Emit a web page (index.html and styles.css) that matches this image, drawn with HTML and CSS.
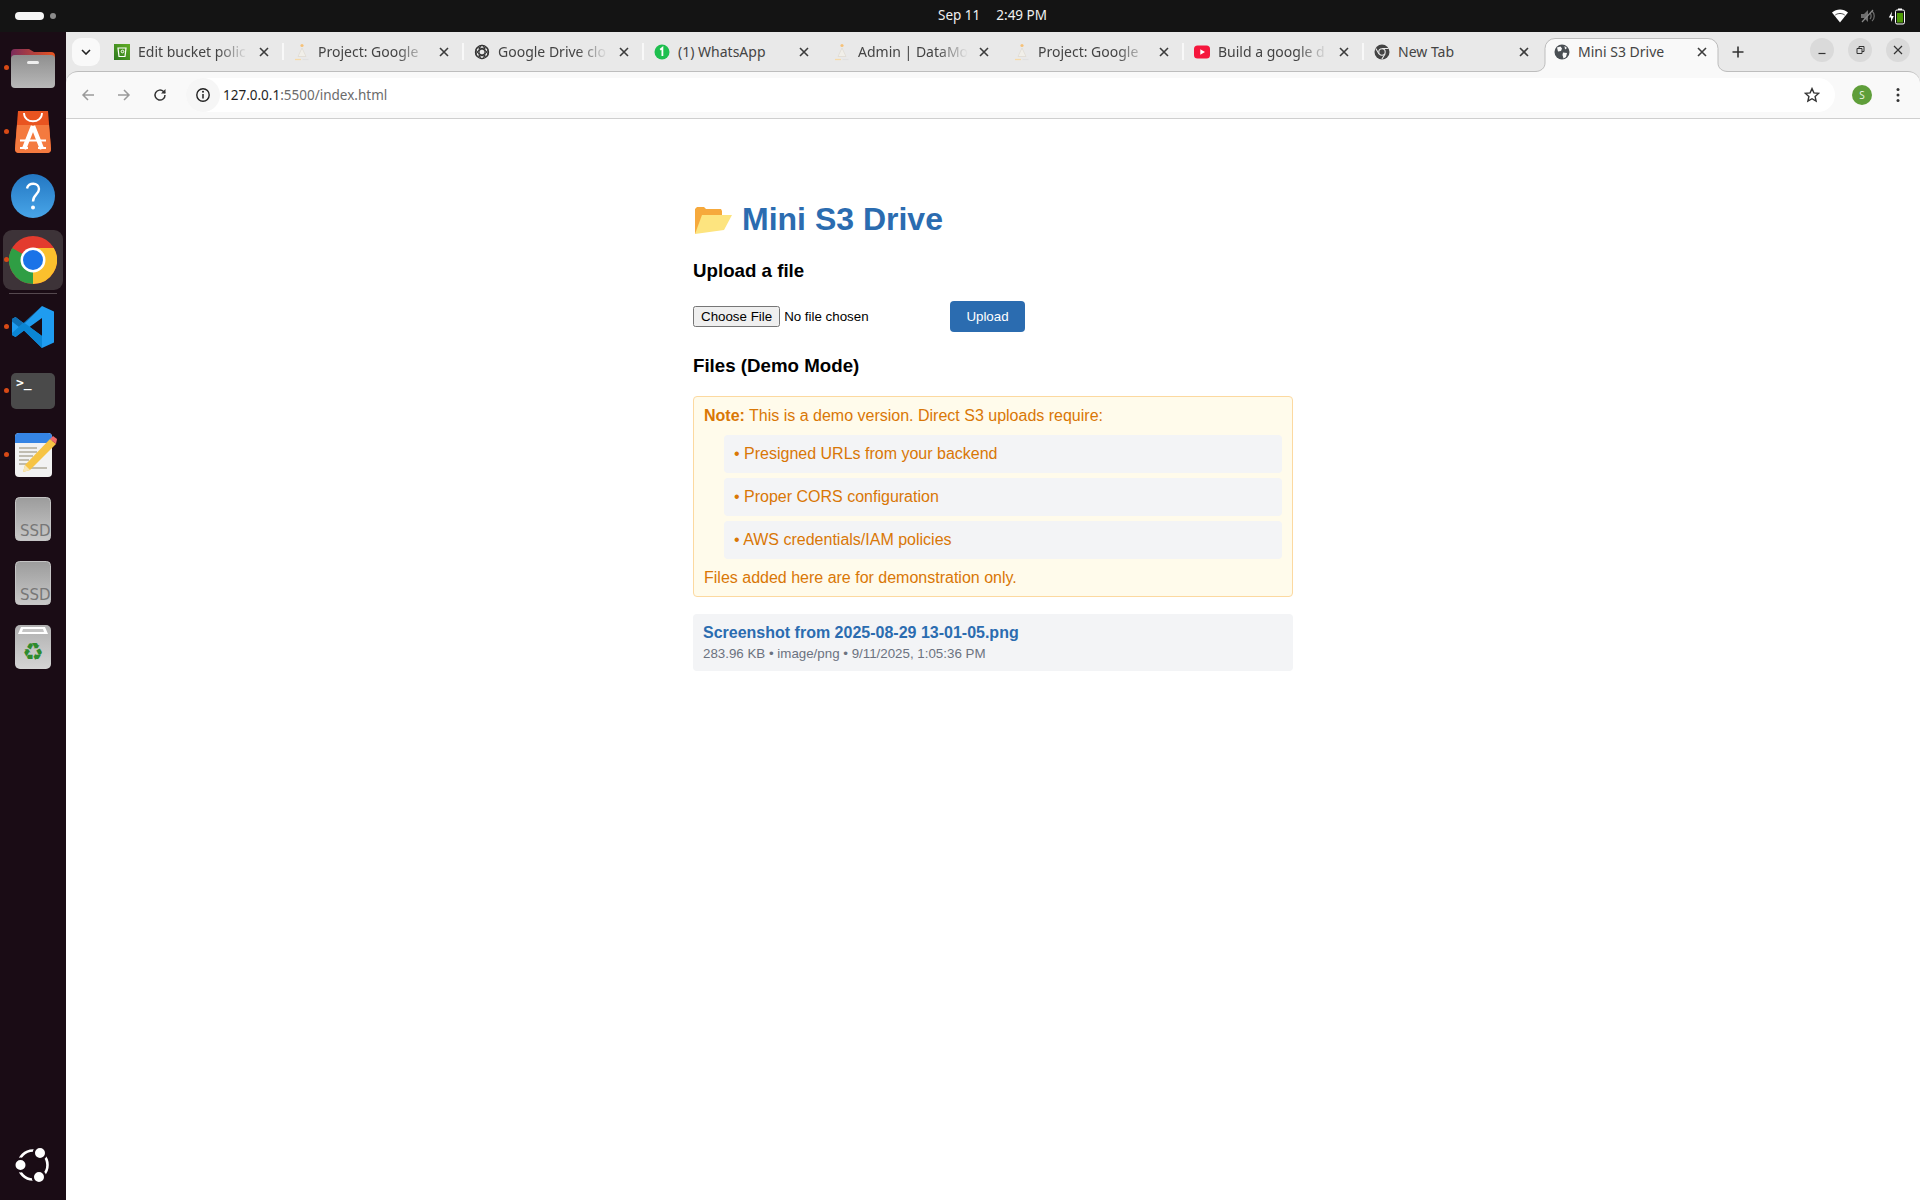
FILE: index.html
```html
<!DOCTYPE html>
<html lang="en">
<head>
<meta charset="utf-8">
<title>Mini S3 Drive</title>
<link rel="stylesheet" href="styles.css">
</head>
<body>
<svg class="defs" width="0" height="0" aria-hidden="true">
  <defs>
    <linearGradient id="ssdg" x1="0" y1="0" x2="0" y2="1"><stop offset="0" stop-color="#9c9c9c"/><stop offset="1" stop-color="#c8c8c8"/></linearGradient>
    <linearGradient id="s3g" x1="0" y1="1" x2="1" y2="0"><stop offset="0" stop-color="#2d7a1f"/><stop offset="1" stop-color="#62ad25"/></linearGradient>
  </defs>
  <symbol id="x" viewBox="0 0 12 12"><path d="M2 2l8 8M10 2l-8 8" fill="none" stroke="#3c3c3c" stroke-width="1.600"/></symbol>
  <symbol id="monk" viewBox="0 0 16 20">
    <circle cx="8" cy="3.500" r="1.600" fill="#f5c27a"/>
    <path d="M8 6L4 14.500h8z" fill="#f1efe9" stroke="#dcd9d0" stroke-width=".7"/>
    <path d="M1 17.500h6" stroke="#f6d9a6" stroke-width="1.300"/><path d="M8.500 17.500h6" stroke="#e0e0e0" stroke-width="1.300"/>
  </symbol>
</svg>

<header class="topbar">
  <div class="workspaces"><span class="pill"></span><span class="dot"></span></div>
  <div class="clock"><span>Sep 11</span><span>2:49 PM</span></div>
  <div class="tray">
    <svg width="16" height="14" viewBox="0 0 16 14"><path d="M0 3.500C4.500-.5 11.500-.5 16 3.500L8 13.500z" fill="#fff"/><path d="M3.300 6C6 4 10 4 12.700 6" stroke="#141414" stroke-width=".8" fill="none"/></svg>
    <svg width="16" height="16" viewBox="0 0 16 16"><path d="M1 6h3l4-4v12l-4-4H1z" fill="#6f6f6f"/><path d="M10 5c1.500 1.500 1.500 4.500 0 6M12 3c3 2.500 3 7.500 0 10" stroke="#6f6f6f" stroke-width="1.200" fill="none"/><path d="M2 14L13 2" stroke="#8a8a8a" stroke-width="1.200"/></svg>
    <svg width="17" height="17" viewBox="0 0 17 17"><path d="M4 3.500L.8 9.500h2.200v4.500L5.800 8H3.500z" fill="#fff"/><rect x="7.500" y="2" width="9" height="14" rx="1.500" fill="none" stroke="#fff" stroke-width="1"/><rect x="10" y=".5" width="4" height="1.500" fill="#fff"/><rect x="9" y="5" width="6" height="9.500" fill="#4e9a06"/></svg>
  </div>
</header>

<div class="desktop">
  <nav class="dock">
    <div class="dock-item running">
      <svg width="44" height="40" viewBox="0 0 44 40"><defs><linearGradient id="fb" x1="0" y1="0" x2="1" y2="0"><stop offset="0" stop-color="#7b2c5c"/><stop offset="1" stop-color="#e95420"/></linearGradient><linearGradient id="ff" x1="0" y1="0" x2="0" y2="1"><stop offset="0" stop-color="#8f8f8f"/><stop offset="1" stop-color="#b8b8b8"/></linearGradient></defs><path d="M0 5a4 4 0 0 1 4-4h14l5 3h17a4 4 0 0 1 4 4v10H0z" fill="url(#fb)"/><rect y="7" width="44" height="33" rx="4" fill="url(#ff)"/><rect x="16" y="13" width="12" height="3" rx="1.500" fill="#eee"/></svg>
    </div>
    <div class="dock-item running">
      <svg width="36" height="42" viewBox="0 0 36 42"><path d="M3 0h30l3 38a4 4 0 0 1-4 4H4a4 4 0 0 1-4-4z" fill="#e95420"/><path d="M2 14h32l2 24a4 4 0 0 1-4 4H4a4 4 0 0 1-4-4z" fill="#f47a3f"/><path d="M9 2c0 11 18 11 18 0" fill="none" stroke="#fff" stroke-width="1.800"/><path d="M18 15L9 38M18 15l9 23" stroke="#fff" stroke-width="4.500" fill="none"/><path d="M5 29.500h26M5 37h8M23 37h8" stroke="#fff" stroke-width="2.200" fill="none"/></svg>
    </div>
    <div class="dock-item">
      <svg width="44" height="44" viewBox="0 0 44 44"><defs><linearGradient id="hg" x1="0" y1="0" x2="0" y2="1"><stop offset="0" stop-color="#2377c2"/><stop offset="1" stop-color="#48a5e8"/></linearGradient></defs><circle cx="22" cy="22" r="22" fill="url(#hg)"/><path d="M16 14.500c1-6.500 12-6.500 12 .5 0 5.500-6 5.500-6 12.500" fill="none" stroke="#fff" stroke-width="2.400"/><circle cx="22" cy="33.500" r="2" fill="#fff"/></svg>
    </div>
    <div class="dock-item running active">
      <svg width="48" height="48" viewBox="0 0 48 48"><circle cx="24" cy="24" r="24" fill="#e33b2e"/><path d="M24 24L3.200 12A24 24 0 0 0 24 48z" fill="#2f9e44"/><path d="M24 24v24A24 24 0 0 0 44.800 12H24z" fill="#fbc02d"/><circle cx="24" cy="24" r="12.500" fill="#fff"/><circle cx="24" cy="24" r="10" fill="#1a73e8"/></svg>
    </div>
    <div class="dock-sep"></div>
    <div class="dock-item running">
      <svg width="42" height="42" viewBox="0 0 42 42"><path d="M30 0l12 5.500v31L30 42 12 24.500 3.500 31 0 29V13l3.500-2 8.500 6.500zM30 12L17.500 21 30 30z" fill="#1f9cf0"/><path d="M30 0L7 21 0 15.500V13l3.500-2 8.500 6.500z" fill="#0f6fb3"/><path d="M0 29l3.500 2 8.500-6.500 18 17.500v-12L12 16.500 0 27z" fill="#0b86d4"/></svg>
    </div>
    <div class="dock-item running">
      <svg width="44" height="36" viewBox="0 0 44 36"><rect width="44" height="36" rx="5" fill="#4a4a4a"/><text x="5" y="14" class="term-prompt">&gt;_</text></svg>
    </div>
    <div class="dock-item running">
      <svg class="notes-icon" width="42" height="44" viewBox="0 0 42 44"><rect x="0" width="37" height="44" rx="4" fill="#f2f2f2"/><path d="M0 10V4a4 4 0 0 1 4-4h29a4 4 0 0 1 4 4v6z" fill="#3584e4"/><path d="M4 15h18M4 19h18M4 23h14M4 27h10M4 31h8M14 35h18" stroke="#c0bcb0" stroke-width="2"/><path d="M35 6l6 5L15 37l-7 2 2-7z" fill="#f6c445"/><path d="M10 32l5 5-7 2z" fill="#f6e5b5"/><path d="M35 6l3-3 4 3-1 5z" fill="#ed6a6a"/></svg>
    </div>
    <div class="dock-item"><svg width="36" height="44" viewBox="0 0 36 44"><rect x=".5" y=".5" width="35" height="43" rx="4" fill="url(#ssdg)" stroke="#c4c4c4"/><text x="5" y="39" class="ssd-label">SSD</text></svg></div>
    <div class="dock-item"><svg width="36" height="44" viewBox="0 0 36 44"><rect x=".5" y=".5" width="35" height="43" rx="4" fill="url(#ssdg)" stroke="#c4c4c4"/><text x="5" y="39" class="ssd-label">SSD</text></svg></div>
    <div class="dock-item">
      <svg width="36" height="44" viewBox="0 0 36 44"><defs><linearGradient id="tg" x1="0" y1="0" x2="0" y2="1"><stop offset="0" stop-color="#b0b0b0"/><stop offset="1" stop-color="#d4d4d4"/></linearGradient></defs><rect width="36" height="44" rx="5" fill="url(#tg)"/><path d="M6 2h24l3 7H3z" fill="#fff"/><path d="M8 4h20l1 3H7z" fill="#c4c4c4"/><text x="18" y="35" text-anchor="middle" class="recycle">♻</text></svg>
    </div>
    <div class="dock-item dock-bottom">
      <svg width="36" height="36" viewBox="0 0 36 36"><circle cx="18" cy="18" r="14.500" fill="none" stroke="#fff" stroke-width="2.600"/><g fill="#fff" stroke="#1a0c15" stroke-width="2.400"><circle cx="25" cy="6" r="6.200"/><circle cx="5.500" cy="18" r="6.200"/><circle cx="24" cy="30" r="6.200"/></g></svg>
    </div>
  </nav>

  <div class="browser">
    <div class="tabstrip">
      <div class="tab-menu"><svg width="10" height="6" viewBox="0 0 10 6"><path d="M1 1l4 4 4-4" fill="none" stroke="#222" stroke-width="1.600"/></svg></div>
      <div class="tab sep">
        <svg class="fav" width="16" height="16" viewBox="0 0 16 16"><rect width="16" height="16" fill="url(#s3g)"/><path d="M4 4h8l-1 8.500H5z" fill="none" stroke="#fff" stroke-width="1.200"/><circle cx="8.500" cy="7.500" r="1.300" fill="none" stroke="#fff"/></svg>
        <span class="tab-title">Edit bucket polic</span><svg class="close" width="12" height="12"><use href="#x"/></svg>
      </div>
      <div class="tab sep">
        <svg class="fav" width="16" height="20"><use href="#monk"/></svg>
        <span class="tab-title">Project: Google</span><svg class="close" width="12" height="12"><use href="#x"/></svg>
      </div>
      <div class="tab sep">
        <svg class="fav" width="16" height="16" viewBox="0 0 16 16"><g fill="none" stroke="#333" stroke-width="1.200"><circle cx="8" cy="8" r="6.600"/><ellipse cx="8" cy="8" rx="6.600" ry="3" transform="rotate(30 8 8)"/><ellipse cx="8" cy="8" rx="6.600" ry="3" transform="rotate(90 8 8)"/><ellipse cx="8" cy="8" rx="6.600" ry="3" transform="rotate(150 8 8)"/></g></svg>
        <span class="tab-title">Google Drive clo</span><svg class="close" width="12" height="12"><use href="#x"/></svg>
      </div>
      <div class="tab">
        <svg class="fav" width="16" height="16" viewBox="0 0 16 16"><circle cx="8" cy="8" r="7.500" fill="#1fbf4f"/><path d="M6.200 5.800L8.400 4v8" fill="none" stroke="#fff" stroke-width="1.800"/></svg>
        <span class="tab-title plain">(1) WhatsApp</span><svg class="close" width="12" height="12"><use href="#x"/></svg>
      </div>
      <div class="tab">
        <svg class="fav" width="16" height="20"><use href="#monk"/></svg>
        <span class="tab-title">Admin | DataMo</span><svg class="close" width="12" height="12"><use href="#x"/></svg>
      </div>
      <div class="tab sep">
        <svg class="fav" width="16" height="20"><use href="#monk"/></svg>
        <span class="tab-title">Project: Google</span><svg class="close" width="12" height="12"><use href="#x"/></svg>
      </div>
      <div class="tab sep">
        <svg class="fav" width="16" height="16" viewBox="0 0 16 16"><rect y="1.500" width="16" height="13" rx="3.500" fill="#f5163c"/><path d="M6.300 5.300L11 8l-4.700 2.700z" fill="#fff"/></svg>
        <span class="tab-title">Build a google d</span><svg class="close" width="12" height="12"><use href="#x"/></svg>
      </div>
      <div class="tab">
        <svg class="fav" width="16" height="16" viewBox="0 0 16 16"><circle cx="8" cy="8" r="7.500" fill="#444"/><path d="M8 4.500h6.500M5 10L1.800 4.500M11 10l-3.200 5.300" stroke="#e9e9e9" stroke-width="1.100"/><circle cx="8" cy="8" r="3.200" fill="#444" stroke="#e9e9e9" stroke-width="1.100"/></svg>
        <span class="tab-title plain">New Tab</span><svg class="close" width="12" height="12"><use href="#x"/></svg>
      </div>
      <div class="tab active">
        <svg class="tab-shape" width="193" height="34" viewBox="0 0 193 34"><path d="M0 34V33.500C6 33.500 10 30 10 25V10.500A10 10 0 0 1 20 .5H173A10 10 0 0 1 183 10.500V25C183 30 187 33.500 193 33.500V34z" fill="#f9f9f9"/><path d="M0 33.500C6 33.500 10 30 10 25V10.500A10 10 0 0 1 20 .5H173A10 10 0 0 1 183 10.500V25C183 30 187 33.500 193 33.500" fill="none" stroke="#bdbdbd"/></svg>
        <svg class="fav" width="16" height="16" viewBox="0 0 16 16"><circle cx="8" cy="8" r="7.500" fill="#4a4f54"/><path d="M3 3.500l3.500-1 1.500 2-1 2.500-3 .5zM9 8.500l4 .5-1 4-2.500 1.500L8.500 11zM10.500 2l2.500 2-2 1.500z" fill="#f9f9f9"/></svg>
        <span class="tab-title plain">Mini S3 Drive</span><svg class="close" width="12" height="12"><use href="#x"/></svg>
      </div>
      <svg class="new-tab" width="14" height="14" viewBox="0 0 14 14"><path d="M7 1.500v11M1.500 7h11" stroke="#333" stroke-width="1.600"/></svg>
      <div class="win-controls">
        <span class="win-btn"><svg width="10" height="10" viewBox="0 0 10 10"><path d="M1.500 8.500h7" stroke="#333" stroke-width="1.200"/></svg></span>
        <span class="win-btn"><svg width="10" height="10" viewBox="0 0 10 10"><path d="M2 3.500h5v5H2zM4 3.500V1.500h5v5H7" fill="none" stroke="#333" stroke-width="1"/></svg></span>
        <span class="win-btn"><svg width="10" height="10" viewBox="0 0 10 10"><path d="M1 1l8 8M9 1L1 9" stroke="#333" stroke-width="1.200"/></svg></span>
      </div>
    </div>

    <div class="toolbar">
      <svg class="nav-icon" width="16" height="16" viewBox="0 0 16 16"><path d="M14 8H3M8 3L3 8l5 5" fill="none" stroke="#9a9a9a" stroke-width="1.500"/></svg>
      <svg class="nav-icon" width="16" height="16" viewBox="0 0 16 16"><path d="M2 8h11M8 3l5 5-5 5" fill="none" stroke="#9a9a9a" stroke-width="1.500"/></svg>
      <svg class="nav-icon" width="16" height="16" viewBox="0 0 16 16"><path d="M13 8a5 5 0 1 1-1.500-3.500L13 6" fill="none" stroke="#333" stroke-width="1.500"/><path d="M13.500 2v4.500H9z" fill="#333"/></svg>
      <div class="omnibox">
        <span class="info-chip"><svg width="16" height="16" viewBox="0 0 16 16"><circle cx="8" cy="8" r="6.200" fill="none" stroke="#222" stroke-width="1.400"/><path d="M8 7v4.500" stroke="#222" stroke-width="1.500"/><circle cx="8" cy="4.800" r="1" fill="#222"/></svg></span>
        <span class="url"><span class="host">127.0.0.1</span>:5500/index.html</span>
        <svg class="star" width="16" height="16" viewBox="0 0 16 16"><path d="M8 1.600l1.900 4.300 4.700.5-3.500 3.100 1 4.600L8 11.700l-4.100 2.400 1-4.600L1.400 6.400l4.700-.5z" fill="none" stroke="#333" stroke-width="1.400"/></svg>
      </div>
      <span class="avatar">S</span>
      <svg class="kebab" width="4" height="16" viewBox="0 0 4 16"><circle cx="2" cy="2.500" r="1.500" fill="#333"/><circle cx="2" cy="8" r="1.500" fill="#333"/><circle cx="2" cy="13.500" r="1.500" fill="#333"/></svg>
    </div>

    <main class="page">
      <div class="content">
        <h1 class="title">
          <svg class="title-emoji" width="38" height="30" viewBox="0 0 38 30"><path d="M1 30L1 5l2-2h7l2 2h15l1 2v4z" fill="#f6a93c"/><path d="M1 30L8 11h30l-8 15z" fill="#fde47f"/></svg>
          <span>Mini S3 Drive</span>
        </h1>
        <h2 class="section-title">Upload a file</h2>
        <div class="upload-row">
          <input class="file-input" type="file">
          <button class="upload-btn" type="button">Upload</button>
        </div>
        <h2 class="section-title files-title">Files (Demo Mode)</h2>
        <div class="note">
          <p class="note-line"><strong>Note:</strong> This is a demo version. Direct S3 uploads require:</p>
          <ul class="note-list">
            <li>• Presigned URLs from your backend</li>
            <li>• Proper CORS configuration</li>
            <li>• AWS credentials/IAM policies</li>
          </ul>
          <p class="note-line">Files added here are for demonstration only.</p>
        </div>
        <div class="file-row">
          <a class="file-name" href="#">Screenshot from 2025-08-29 13-01-05.png</a>
          <div class="file-meta">283.96 KB • image/png • 9/11/2025, 1:05:36 PM</div>
        </div>
      </div>
    </main>
  </div>
</div>
</body>
</html>
```

FILE: styles.css
```css
* { box-sizing: border-box; }
html, body { margin: 0; height: 100%; }
body {
  width: 1920px;
  height: 1200px;
  overflow: hidden;
  display: flex;
  flex-direction: column;
  font-family: "Liberation Sans", Arial, sans-serif;
  background: #1a0c15;
}
.defs { display: block; height: 0; }
.ssd-label { font: 15px "DejaVu Sans", sans-serif; fill: #777; }
.term-prompt { font: bold 13px "DejaVu Sans Mono", monospace; fill: #fff; }
.recycle { font: 24px "DejaVu Sans", sans-serif; fill: #2e8b2e; }

/* top bar */
.topbar {
  height: 32px;
  flex: none;
  background: #141414;
  display: grid;
  grid-template-columns: 938px auto 1fr;
  align-items: center;
  color: #f0f0f0;
  font: 14px "Noto Sans", sans-serif;
}
.workspaces { display: flex; align-items: center; gap: 6px; padding-left: 15px; }
.pill { width: 29px; height: 8px; border-radius: 4px; background: #f5f5f5; }
.dot { width: 6px; height: 6px; border-radius: 50%; background: #8c8c8c; }
.clock { display: flex; gap: 16px; font-size: 13.500px; line-height: 30px; height: 32px; }
.tray { display: flex; align-items: center; justify-content: flex-end; gap: 12px; padding-right: 15px; }

.desktop { flex: 1; display: flex; min-height: 0; }

/* dock */
.dock {
  width: 66px;
  flex: none;
  display: flex;
  flex-direction: column;
  align-items: center;
  padding: 4px 0 3px;
  background: #1a0c15;
}
.dock-item {
  position: relative;
  width: 60px;
  height: 64px;
  flex: none;
  display: flex;
  align-items: center;
  justify-content: center;
}
.dock-item.running::before {
  content: "";
  position: absolute;
  left: 1px;
  top: 29px;
  width: 5px;
  height: 5px;
  border-radius: 50%;
  background: #d84a16;
  z-index: 2;
}
.dock-item.active::after {
  content: "";
  position: absolute;
  inset: 2px 0;
  border-radius: 9px;
  background: #3d3338;
}
.dock-item.active svg { position: relative; z-index: 1; }
.notes-icon { margin-left: 6px; }
.dock-sep { width: 48px; height: 3px; flex: none; padding-top: 1px; }
.dock-sep::before { content: ""; display: block; height: 1px; background: #55494f; }
.dock-bottom { margin-top: auto; }

/* browser */
.browser { flex: 1; min-width: 0; display: flex; flex-direction: column; background: #fff; }
.tabstrip {
  position: relative;
  z-index: 2;
  height: 39px;
  flex: none;
  display: flex;
  align-items: flex-start;
  padding: 6px 0 0 6px;
  background: #e9e9e9;
  font: 14px/26px "Noto Sans", sans-serif;
  color: #444;
}
.tab-menu {
  width: 28px;
  height: 28px;
  margin-right: 3px;
  flex: none;
  display: flex;
  align-items: center;
  justify-content: center;
  border-radius: 9px;
  background: #f9f9f9;
}
.tab {
  position: relative;
  width: 180px;
  height: 28px;
  flex: none;
  display: flex;
  align-items: center;
  padding-left: 11px;
}
.tab.sep::after {
  content: "";
  position: absolute;
  right: -1px;
  top: 5px;
  width: 2px;
  height: 17px;
  background: #f8f8f8;
}
.fav { flex: none; margin-right: 8px; }
.tab-title {
  width: 110px;
  flex: none;
  overflow: hidden;
  white-space: nowrap;
  -webkit-mask-image: linear-gradient(90deg, #000 72%, transparent 100%);
  mask-image: linear-gradient(90deg, #000 72%, transparent 100%);
}
.tab-title.plain { -webkit-mask-image: none; mask-image: none; }
.close { flex: none; margin-left: 10px; }
.tab.active { z-index: 1; height: 34px; padding-bottom: 6px; }
.tab.active .close { margin-left: 8px; }
.tab-shape { position: absolute; z-index: -1; left: -8px; top: 0; }
.new-tab { flex: none; margin: 7px 0 0 8px; }
.win-controls { margin-left: auto; display: flex; gap: 14px; padding-right: 10px; }
.win-btn {
  width: 24px;
  height: 24px;
  border-radius: 50%;
  background: #dadada;
  display: flex;
  align-items: center;
  justify-content: center;
}

.toolbar {
  height: 48px;
  flex: none;
  display: flex;
  align-items: center;
  padding: 0 20px 0 14px;
  background: #f9f9f9;
  border-top: 1px solid #bdbdbd;
  border-bottom: 1px solid #cfcfcf;
  border-radius: 12px 12px 0 0;
  box-shadow: 0 -12px 0 #e9e9e9;
}
.nav-icon { flex: none; margin-right: 20px; }
.omnibox {
  flex: 1;
  height: 34px;
  display: flex;
  align-items: center;
  margin-left: -2px;
  padding-right: 15px;
  border-radius: 17px;
  background: #fff;
  font: 13.500px "Noto Sans", sans-serif;
  color: #6b6b6b;
}
.info-chip {
  width: 34px;
  height: 34px;
  flex: none;
  margin-right: 3px;
  border-radius: 50%;
  background: #f6f6f6;
  display: flex;
  align-items: center;
  justify-content: center;
}
.host { color: #1f1f1f; }
.url { flex: 1; }
.star { flex: none; }
.avatar {
  width: 20px;
  height: 20px;
  flex: none;
  margin: 0 0 0 17px;
  border-radius: 50%;
  background: #5f9e3a;
  color: #e8f2e0;
  font: 10px/20px "Noto Sans", sans-serif;
  text-align: center;
}
.kebab { flex: none; margin: 0 0 0 24px; }

/* page */
.page { flex: 1; background: #fff; color: #000; }
.content { width: 600px; margin: 0 auto; padding-top: 80px; }
.title {
  display: flex;
  align-items: center;
  margin: 0;
  height: 40px;
  gap: 10px;
  color: #2b6cb0;
  font-size: 32px;
  font-weight: 700;
}
.title-emoji { flex: none; margin-left: 1px; }
.section-title { margin: 21px 0 0; font-size: 18.720px; line-height: 22px; font-weight: 700; }
.upload-row { margin-top: 19px; height: 31px; display: flex; align-items: center; }
.file-input { font: 13.333px "Liberation Sans", Arial, sans-serif; width: 253px; margin-right: 4px; }
.upload-btn {
  width: 75px;
  height: 31px;
  padding: 0;
  border: 0;
  border-radius: 4px;
  background: #2b6cb0;
  color: #fff;
  font: 13.333px "Liberation Sans", Arial, sans-serif;
}
.files-title { margin-top: 23px; }
.note {
  margin-top: 19px;
  padding: 10px 10px 8px;
  height: 201px;
  background: #fffbeb;
  border: 1px solid #fcd9a0;
  border-radius: 4px;
  color: #d97706;
  font-size: 16px;
  line-height: 18px;
}
.note-line { margin: 0; }
.note-list { list-style: none; margin: 10px 0 10px; padding: 0 0 0 20px; }
.note-list li {
  height: 38px;
  padding: 10px;
  margin-bottom: 5px;
  border-radius: 4px;
  background: #f3f4f6;
}
.note-list li:last-child { margin-bottom: 0; }
.file-row {
  margin-top: 17px;
  height: 57px;
  padding: 10px 10px 9px;
  border-radius: 4px;
  background: #f3f4f6;
}
.file-name { display: block; color: #2b6cb0; font-size: 16px; line-height: 18px; font-weight: 700; text-decoration: none; }
.file-meta { margin-top: 4px; color: #6b7280; font-size: 13.333px; line-height: 15px; }
```
